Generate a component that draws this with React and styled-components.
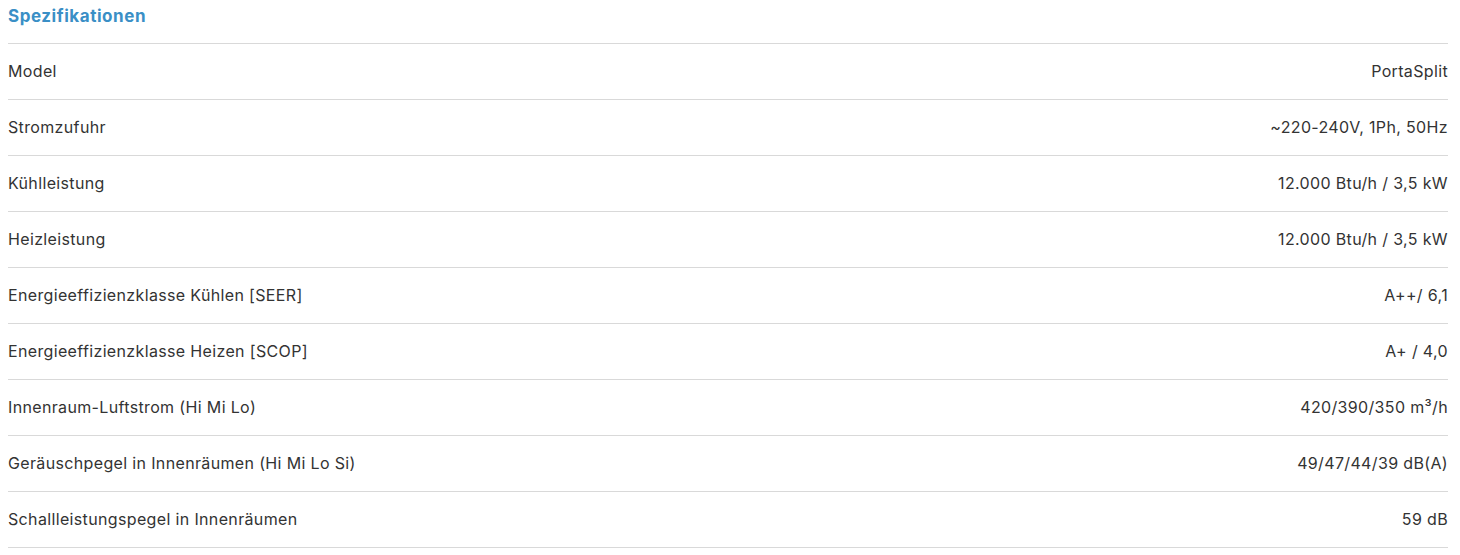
import styled, { createGlobalStyle } from "styled-components";

const specs = [
  ["Model", "PortaSplit"],
  ["Stromzufuhr", "~220-240V, 1Ph, 50Hz"],
  ["Kühlleistung", "12.000 Btu/h / 3,5 kW"],
  ["Heizleistung", "12.000 Btu/h / 3,5 kW"],
  ["Energieeffizienzklasse Kühlen [SEER]", "A++/ 6,1"],
  ["Energieeffizienzklasse Heizen [SCOP]", "A+ / 4,0"],
  ["Innenraum-Luftstrom (Hi Mi Lo)", "420/390/350 m³/h"],
  ["Geräuschpegel in Innenräumen (Hi Mi Lo Si)", "49/47/44/39 dB(A)"],
  ["Schallleistungspegel in Innenräumen", "59 dB"],
];

const App = () => {
  return (
    <>
      <GlobalStyle />
      <SpecSection>
        <Title>Spezifikationen</Title>
        <SpecTable>
          {specs.map(([label, value]) => (
            <SpecRow key={label}>
              <Label>{label}</Label>
              <Value>{value}</Value>
            </SpecRow>
          ))}
        </SpecTable>
      </SpecSection>
    </>
  );
};

export default App;

const GlobalStyle = createGlobalStyle`
  body {
    margin: 0;
    background: #fff;
    font-family: "Inter", "Noto Sans", sans-serif;
    color: #333;
  }
`;

const SpecSection = styled.section`
  width: 1440px;
  padding: 0 8px;
`;

const Title = styled.h3`
  margin: 0;
  height: 43px;
  display: flex;
  align-items: center;
  padding-bottom: 11px;
  box-sizing: border-box;
  font-size: 17px;
  font-weight: 700;
  letter-spacing: 0.55px;
  color: #3a8fc6;
  line-height: 1;
`;

const SpecTable = styled.div`
  border-top: 1px solid #d9d9d9;
`;

const SpecRow = styled.div`
  display: flex;
  justify-content: space-between;
  align-items: center;
  height: 56px;
  box-sizing: border-box;
  padding-bottom: 2px;
  border-bottom: 1px solid #d9d9d9;
  font-size: 16px;
  letter-spacing: 0.35px;
`;

const Label = styled.span`
  color: #333;
`;

const Value = styled.span`
  color: #333;
  text-align: right;
`;
